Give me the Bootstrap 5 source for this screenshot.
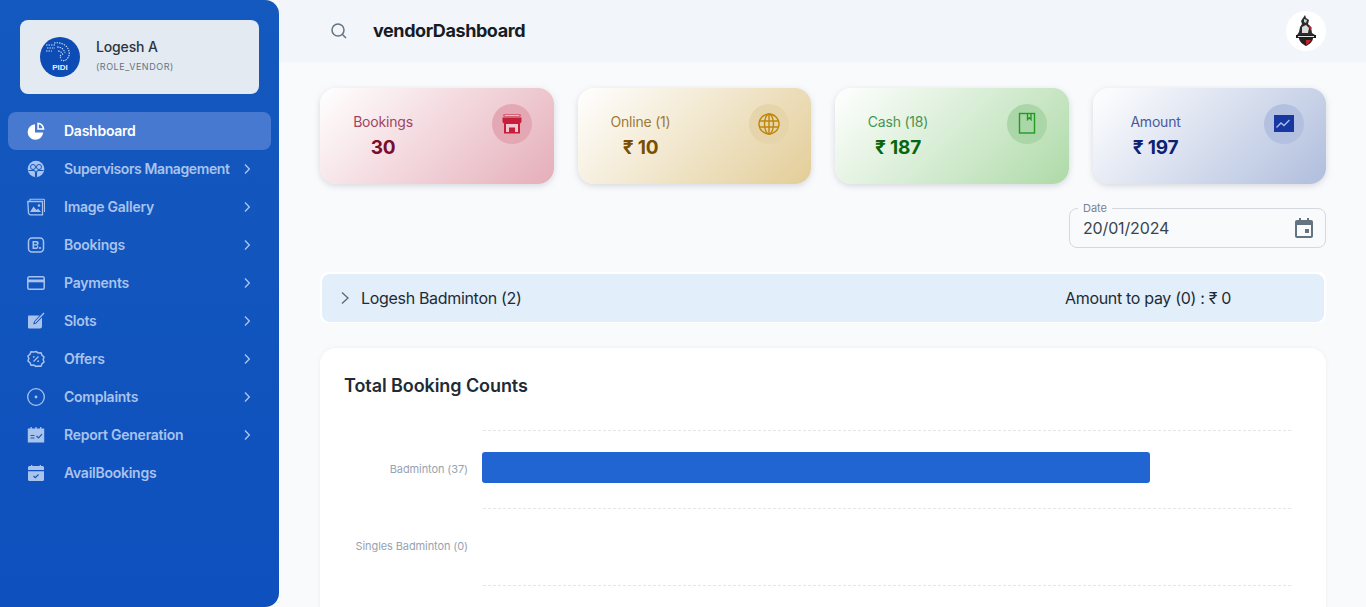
<!DOCTYPE html>
<html lang="en">
<head>
    <meta charset="UTF-8">
    <meta name="viewport" content="width=device-width, initial-scale=1.0">
    <title>vendorDashboard</title>
    <link href="https://cdn.jsdelivr.net/npm/bootstrap@5.3.0/dist/css/bootstrap.min.css" rel="stylesheet">
    <style>
        html, body { height: 100%; }
        body {
            background: #f9fafc;
            font-family: "Inter", "Liberation Sans", sans-serif;
            color: #212b36;
            overflow: hidden;
        }
        .app-shell { height: 607px; overflow: hidden; }
        .side-panel {
            width: 279px;
            flex-shrink: 0;
            background: linear-gradient(180deg, #1459be 0%, #0e50bd 100%);
            border-radius: 0 14px 14px 0;
            padding: 20px 8px 0;
        }
        .user-box {
            margin: 0 12px 18px;
            height: 74px;
            padding: 0 20px 3px;
            background: #e3eaf1;
            border-radius: 8px;
            gap: 16px;
        }
        .user-pic { width: 40px; height: 40px; margin-top: 3px; }
        .user-name { font-size: 14px; line-height: 18px; font-weight: 500; color: #2b3541; letter-spacing: -.15px; }
        .user-role { font-size: 9px; line-height: 12px; margin-top: 5px; color: #67727f; letter-spacing: .55px; }
        .menu-row {
            height: 38px;
            padding: 0 20px 2px 19px;
            gap: 19px;
            border-radius: 8px;
            color: #a9c3ec;
            font-size: 14px;
            font-weight: 600;
            letter-spacing: -.25px;
            text-decoration: none;
            white-space: nowrap;
        }
        .menu-row.is-active { background: #4679cf; color: #fff; }
        .menu-icon { width: 18px; height: 18px; flex-shrink: 0; margin-top: 2px; }
        .menu-arrow { width: 8px; height: 12px; margin-left: auto; flex-shrink: 0; margin-top: 2px; }
        .tight-label { letter-spacing: -.4px; margin-right: -12px; }
        .content-col { min-width: 0; }
        .top-strip { height: 62px; background: #f2f5fa; padding: 0 40px 0 51px; }
        .page-name { font-size: 18px; font-weight: 700; color: #161c24; margin-left: 25px; padding-bottom: 2px; letter-spacing: -.42px; }
        .vendor-pic { width: 40px; height: 40px; margin-left: auto; background: #fff; }
        .page-body { padding: 26px 40px 0 41px; }
        .stat-grid { display: grid; grid-template-columns: repeat(4, minmax(0, 1fr)); gap: 24px; }
        .stat-tile {
            height: 96px;
            border-radius: 16px;
            box-shadow: 0 2px 6px rgba(145, 158, 171, .35);
            padding: 16px 22px 0 0;
        }
        .stat-text { width: 126px; text-align: center; padding-top: 8px; }
        .stat-label { font-size: 14px; line-height: 20px; letter-spacing: -.2px; }
        .stat-num { font-size: 19px; line-height: 29px; padding-top: 1px; font-weight: 700; letter-spacing: -.2px; }
        .stat-badge { width: 40px; height: 40px; }
        .stat-badge svg { width: 24px; height: 24px; }
        .tile-red { background: linear-gradient(135deg, #fff 0%, #e5aeb9 100%); }
        .tile-red .stat-label { color: #a04561; }
        .tile-red .stat-num { color: #7a0c2e; }
        .tile-red .stat-badge { background: #e3a8b3; }
        .tile-gold { background: linear-gradient(135deg, #fff 0%, #e3cd98 100%); }
        .tile-gold .stat-label { color: #9c7a3a; }
        .tile-gold .stat-num { color: #7a4f01; }
        .tile-gold .stat-badge { background: #e6d5aa; }
        .tile-green { background: linear-gradient(135deg, #fff 0%, #aedaa8 100%); }
        .tile-green .stat-label { color: #4a9450; }
        .tile-green .stat-num { color: #08660d; }
        .tile-green .stat-badge { background: #abd6a8; }
        .tile-blue { background: linear-gradient(135deg, #fff 0%, #b0bedd 100%); }
        .tile-blue .stat-label { color: #495a9c; }
        .tile-blue .stat-num { color: #0c2172; }
        .tile-blue .stat-badge { background: #b3c0df; }
        .date-wrap { width: 257px; height: 40px; margin: 24px 0 0 auto; border: 1px solid #d4d9e0; border-radius: 8px; padding: 0 9px 0 13px; position: relative; }
        .date-label { position: absolute; top: -7px; left: 8px; padding: 0 5px; background: #f9fafc; font-size: 11px; line-height: 13px; color: #78838f; }
        .date-value { font-size: 16px; color: #3a4450; letter-spacing: -.15px; }
        .date-icon { width: 24px; height: 24px; margin-left: auto; }
        .acc-wrap { margin-top: 24px; background: #fff; padding: 2px 2px 1px; border-radius: 8px; }
        .acc-head { height: 48px; background: #e3eefb; border-radius: 8px; padding: 0 0 0 18px; font-size: 16px; color: #212b36; letter-spacing: -.32px; }
        .acc-arrow { width: 10px; height: 14px; margin-right: 11px; }
        .acc-due { position: absolute; left: 745px; }
        .chart-panel { margin-top: 25px; background: #fff; border-radius: 16px; padding: 24px 35px 0 24px; box-shadow: 0 0 4px rgba(145, 158, 171, .12); }
        .chart-title { font-size: 18px; line-height: 28px; font-weight: 600; color: #212b36; margin-bottom: 30px; letter-spacing: -.08px; }
        .plot-row { height: 77.5px; }
        .plot-label { width: 124px; flex-shrink: 0; text-align: right; font-size: 11px; color: #97a3b1; letter-spacing: -.1px; white-space: nowrap; }
        .plot-track { margin-left: 15px; flex-grow: 1; height: 100%; border-top: 1px dashed #e3e7eb; padding-bottom: 4px; }
        .plot-bar { height: 31px; background: #2065d1; border-radius: 3px; margin-left: -1px; }
    </style>
</head>
<body>
    <div class="app-shell d-flex">
        <aside class="side-panel">
            <div class="user-box d-flex align-items-center">
                <svg class="user-pic" viewBox="0 0 40 40">
                    <circle cx="20" cy="20" r="20" fill="#0d4bb5"/>
                    <g fill="none" stroke="#cfe0f7" stroke-width="1.100" stroke-dasharray="1.500 1">
                        <path d="M6 8h9M7 11h8M6 14h6"/>
                        <path d="M14 6c6-1 10 1 13 4 3 4 3 9 0 12-2 2-4 2-6 1"/>
                        <path d="M17 10c4 0 7 2 8 6M18 14c3 0 4 2 5 4M20 18c1 1 1 2 0 3"/>
                    </g>
                    <text x="20" y="33" text-anchor="middle" font-size="8" font-weight="700" fill="#e8f0fb" font-family="Liberation Sans, sans-serif">PIDI</text>
                </svg>
                <div>
                    <div class="user-name">Logesh A</div>
                    <div class="user-role">(ROLE_VENDOR)</div>
                </div>
            </div>
            <nav class="d-flex flex-column">
                <a class="menu-row is-active d-flex align-items-center" href="#">
                    <svg class="menu-icon" viewBox="0 0 18 18" fill="#fff"><path d="M8 2.200a7.800 7.800 0 1 0 8.200 8.200H8z"/><path d="M10.300 .6v7.100h7.100c0-4-3.100-7.100-7.100-7.100zm1.500 1.700c1.900.4 3.300 1.800 3.700 3.900h-3.700z" fill-rule="evenodd"/></svg>
                    Dashboard
                </a>
                <a class="menu-row d-flex align-items-center" href="#">
                    <svg class="menu-icon" viewBox="0 0 18 18"><circle cx="9" cy="9" r="8.300" fill="#a9c3ec"/><circle cx="6" cy="7" r="2.500" fill="#a9c3ec" stroke="#1459be" stroke-width="1"/><circle cx="12" cy="7" r="2.500" fill="#a9c3ec" stroke="#1459be" stroke-width="1"/><path d="M1.500 10.500H6.500a2 2 0 0 1 2 2V17M16.500 10.500H11.500a2 2 0 0 0-2 2V17" fill="none" stroke="#1459be" stroke-width="1.100"/></svg>
                    <span class="tight-label">Supervisors Management</span>
                    <svg class="menu-arrow" viewBox="0 0 8 12"><path d="M2 1.500 6.300 6 2 10.500" fill="none" stroke="#a9c3ec" stroke-width="1.400"/></svg>
                </a>
                <a class="menu-row d-flex align-items-center" href="#">
                    <svg class="menu-icon" viewBox="0 0 18 18"><path d="M3 3V1.200h13.500a1 1 0 0 1 1 1V14" fill="none" stroke="#a9c3ec" stroke-width="1.100"/><path d="M.8 3.500h14.700V16.800H3.500a2.500 2.500 0 0 1-2-2z" fill="none" stroke="#a9c3ec" stroke-width="1.300"/><path d="M3 14 6.500 8.500l3 3.500 1.500-1.500 3 3.500z" fill="#a9c3ec"/><circle cx="12" cy="7.500" r="1.300" fill="#a9c3ec"/></svg>
                    Image Gallery
                    <svg class="menu-arrow" viewBox="0 0 8 12"><path d="M2 1.500 6.300 6 2 10.500" fill="none" stroke="#a9c3ec" stroke-width="1.400"/></svg>
                </a>
                <a class="menu-row d-flex align-items-center" href="#">
                    <svg class="menu-icon" viewBox="0 0 18 18"><rect x="1.500" y="2" width="15" height="14" rx="3.500" fill="none" stroke="#a9c3ec" stroke-width="1.500"/><path d="M5.500 5v8h3.800a2 2 0 0 0 .7-3.900A2 2 0 0 0 9.300 5zm1.600 1.400h1.900a.8.800 0 0 1 0 1.800H7.100zm0 3.200h2.100a1 1 0 0 1 0 2H7.100z" fill="#a9c3ec" fill-rule="evenodd"/><circle cx="13" cy="12" r="1.100" fill="#a9c3ec"/></svg>
                    Bookings
                    <svg class="menu-arrow" viewBox="0 0 8 12"><path d="M2 1.500 6.300 6 2 10.500" fill="none" stroke="#a9c3ec" stroke-width="1.400"/></svg>
                </a>
                <a class="menu-row d-flex align-items-center" href="#">
                    <svg class="menu-icon" viewBox="0 0 18 18"><rect x=".8" y="2.800" width="16.400" height="12.400" rx="1.500" fill="none" stroke="#a9c3ec" stroke-width="1.500"/><rect x="1" y="5.500" width="16" height="2.800" fill="#a9c3ec"/></svg>
                    Payments
                    <svg class="menu-arrow" viewBox="0 0 8 12"><path d="M2 1.500 6.300 6 2 10.500" fill="none" stroke="#a9c3ec" stroke-width="1.400"/></svg>
                </a>
                <a class="menu-row d-flex align-items-center" href="#">
                    <svg class="menu-icon" viewBox="0 0 18 18"><path d="M2 3.500h10.500L7 9.500 6.200 12.500l3-.9 5.800-6v9a2 2 0 0 1-2 2H2a1 1 0 0 1-1-1V4.500a1 1 0 0 1 1-1z" fill="#a9c3ec"/><path d="M8 10.500 17 1" stroke="#a9c3ec" stroke-width="1.300" fill="none"/></svg>
                    Slots
                    <svg class="menu-arrow" viewBox="0 0 8 12"><path d="M2 1.500 6.300 6 2 10.500" fill="none" stroke="#a9c3ec" stroke-width="1.400"/></svg>
                </a>
                <a class="menu-row d-flex align-items-center" href="#">
                    <svg class="menu-icon" viewBox="0 0 18 18" fill="none" stroke="#a9c3ec" stroke-width="1.500"><path d="M9 1.500l2.300 1.400 2.700-.1 1 2.500 2 1.700-.8 2.500.8 2.500-2 1.700-1 2.500-2.700-.1L9 16.500l-2.300-1.400-2.700.1-1-2.500-2-1.700.8-2.500-.8-2.500 2-1.700 1-2.500 2.700.1z"/><path d="M6.500 11.500l5-5" stroke-width="1.200"/><circle cx="6.800" cy="6.800" r=".9" fill="#a9c3ec" stroke="none"/><circle cx="11.200" cy="11.200" r=".9" fill="#a9c3ec" stroke="none"/></svg>
                    Offers
                    <svg class="menu-arrow" viewBox="0 0 8 12"><path d="M2 1.500 6.300 6 2 10.500" fill="none" stroke="#a9c3ec" stroke-width="1.400"/></svg>
                </a>
                <a class="menu-row d-flex align-items-center" href="#">
                    <svg class="menu-icon" viewBox="0 0 18 18"><circle cx="9" cy="9" r="8.300" fill="none" stroke="#a9c3ec" stroke-width="1.300"/><circle cx="9" cy="9" r="1.400" fill="#a9c3ec"/></svg>
                    Complaints
                    <svg class="menu-arrow" viewBox="0 0 8 12"><path d="M2 1.500 6.300 6 2 10.500" fill="none" stroke="#a9c3ec" stroke-width="1.400"/></svg>
                </a>
                <a class="menu-row d-flex align-items-center" href="#">
                    <svg class="menu-icon" viewBox="0 0 18 18"><path d="M.8 2.500h2.700V1h1.300v1.500h3.500V1h1.300v1.500h3.400V1h1.300v1.500h2.900V16.500H.8z" fill="#a9c3ec"/><path d="M3.500 9.500h4M3.500 12h4" stroke="#1459be" stroke-width="1.100"/><path d="M9.500 10l2 2 3.500-3.800" fill="none" stroke="#1459be" stroke-width="1.200"/></svg>
                    Report Generation
                    <svg class="menu-arrow" viewBox="0 0 8 12"><path d="M2 1.500 6.300 6 2 10.500" fill="none" stroke="#a9c3ec" stroke-width="1.400"/></svg>
                </a>
                <a class="menu-row d-flex align-items-center" href="#">
                    <svg class="menu-icon" viewBox="0 0 18 18"><path d="M4 1h1.300v1H12.700V1H14v1h1.500a1.500 1.500 0 0 1 1.500 1.500V6H1V3.500A1.500 1.500 0 0 1 2.500 2H4z" fill="#a9c3ec"/><path d="M1 7.200h16V15.500a1.500 1.500 0 0 1-1.500 1.500h-13A1.500 1.500 0 0 1 1 15.500z" fill="#a9c3ec"/><path d="M6.500 12l1.800 1.700 3.200-3.200" fill="none" stroke="#1459be" stroke-width="1.200"/></svg>
                    AvailBookings
                </a>
            </nav>
        </aside>

        <div class="content-col flex-grow-1">
            <header class="top-strip d-flex align-items-center">
                <svg width="18" height="18" viewBox="0 0 18 18" fill="none" stroke="#637381" stroke-width="1.500"><circle cx="8" cy="8" r="6"/><path d="M12.500 12.500 16 16"/></svg>
                <div class="page-name">vendorDashboard</div>
                <div class="vendor-pic rounded-circle d-flex align-items-center justify-content-center">
                    <svg width="22" height="34" viewBox="0 0 22 34">
                        <path d="M10 1l1 3 3 2-1 4 3 3 1 6 3 2H2l2-3 1-5 2-3-1-3 2-3z" fill="#2c2c2c"/>
                        <path d="M7 13l4-2 3 3-1 5H7z" fill="#dcdcdc"/>
                        <path d="M9 5l3 1-1 3-2-1z" fill="#cfcfcf"/>
                        <path d="M14 11l3 3-2 2z" fill="#c8202b"/>
                        <rect x="1" y="21" width="20" height="3" fill="#1c1c1c"/>
                        <rect x="3" y="22" width="16" height="1" fill="#e6e6e6"/>
                        <path d="M4 24h14c0 3-3 6-7 8-4-2-7-5-7-8z" fill="#222"/>
                        <path d="M11 26h5c-1 2-3 4-5 5z" fill="#c8202b"/>
                    </svg>
                </div>
            </header>

            <main class="page-body">
                <div class="stat-grid">
                    <div class="stat-tile tile-red d-flex justify-content-between">
                        <div class="stat-text">
                            <div class="stat-label">Bookings</div>
                            <div class="stat-num">30</div>
                        </div>
                        <div class="stat-badge rounded-circle d-flex align-items-center justify-content-center">
                            <svg viewBox="0 0 24 24"><path d="M3.500 2.500h17v2h-17zM2.500 5.500h19v4a2 2 0 0 1-1.500 1.900V21.500H4V11.400A2 2 0 0 1 2.500 9.500z" fill="#c4203c"/><path d="M6 12h12v8h-3v-4.500H9V20H6z" fill="#f3c6ce"/><rect x="4.500" y="3" width="15" height="1" fill="#f3c6ce"/></svg>
                        </div>
                    </div>
                    <div class="stat-tile tile-gold d-flex justify-content-between">
                        <div class="stat-text">
                            <div class="stat-label">Online (1)</div>
                            <div class="stat-num">₹ 10</div>
                        </div>
                        <div class="stat-badge rounded-circle d-flex align-items-center justify-content-center">
                            <svg viewBox="0 0 24 24" fill="none" stroke="#c0860c" stroke-width="1.400"><circle cx="12" cy="12" r="10"/><ellipse cx="12" cy="12" rx="4.500" ry="10"/><path d="M12 2v20M2.500 9h19M2.500 15h19"/></svg>
                        </div>
                    </div>
                    <div class="stat-tile tile-green d-flex justify-content-between">
                        <div class="stat-text">
                            <div class="stat-label">Cash (18)</div>
                            <div class="stat-num">₹ 187</div>
                        </div>
                        <div class="stat-badge rounded-circle d-flex align-items-center justify-content-center">
                            <svg viewBox="0 0 24 24" fill="none" stroke="#1f9d22" stroke-width="1.400"><rect x="4.500" y="1.500" width="15" height="19.500"/><path d="M12.500 1.500v6l1.800-1.800 1.700 1.800v-6"/></svg>
                        </div>
                    </div>
                    <div class="stat-tile tile-blue d-flex justify-content-between">
                        <div class="stat-text">
                            <div class="stat-label">Amount</div>
                            <div class="stat-num">₹ 197</div>
                        </div>
                        <div class="stat-badge rounded-circle d-flex align-items-center justify-content-center">
                            <svg viewBox="0 0 24 24"><rect x="2" y="3" width="20" height="17" fill="#1539a0"/><path d="M4.500 15.500l4.500-4.500 3 2.500 5.500-5.500" fill="none" stroke="#aebde8" stroke-width="1.300"/></svg>
                        </div>
                    </div>
                </div>

                <div class="date-wrap d-flex align-items-center">
                    <span class="date-label">Date</span>
                    <span class="date-value">20/01/2024</span>
                    <svg class="date-icon" viewBox="0 0 24 24" fill="#637381"><path fill-rule="evenodd" d="M7 2h2v2h6V2h2v2h2a2 2 0 0 1 2 2v14a2 2 0 0 1-2 2H5a2 2 0 0 1-2-2V6a2 2 0 0 1 2-2h2zM5 9v11h14V9zm8 4h4v4h-4z"/></svg>
                </div>

                <div class="acc-wrap position-relative">
                    <div class="acc-head d-flex align-items-center">
                        <svg class="acc-arrow" viewBox="0 0 10 14"><path d="M2 1.500 8 7l-6 5.500" fill="none" stroke="#5b6773" stroke-width="1.300"/></svg>
                        <span>Logesh Badminton (2)</span>
                        <span class="acc-due">Amount to pay (0) : ₹ 0</span>
                    </div>
                </div>

                <section class="chart-panel">
                    <h2 class="chart-title">Total Booking Counts</h2>
                    <div class="plot-row d-flex align-items-center">
                        <div class="plot-label">Badminton (37)</div>
                        <div class="plot-track d-flex align-items-center">
                            <div class="plot-bar" style="width: 82.7%"></div>
                        </div>
                    </div>
                    <div class="plot-row d-flex align-items-center">
                        <div class="plot-label">Singles Badminton (0)</div>
                        <div class="plot-track"></div>
                    </div>
                    <div class="plot-row d-flex align-items-center">
                        <div class="plot-label"></div>
                        <div class="plot-track"></div>
                    </div>
                </section>
            </main>
        </div>
    </div>

    <script src="https://cdn.jsdelivr.net/npm/bootstrap@5.3.0/dist/js/bootstrap.bundle.min.js"></script>
</body>
</html>
